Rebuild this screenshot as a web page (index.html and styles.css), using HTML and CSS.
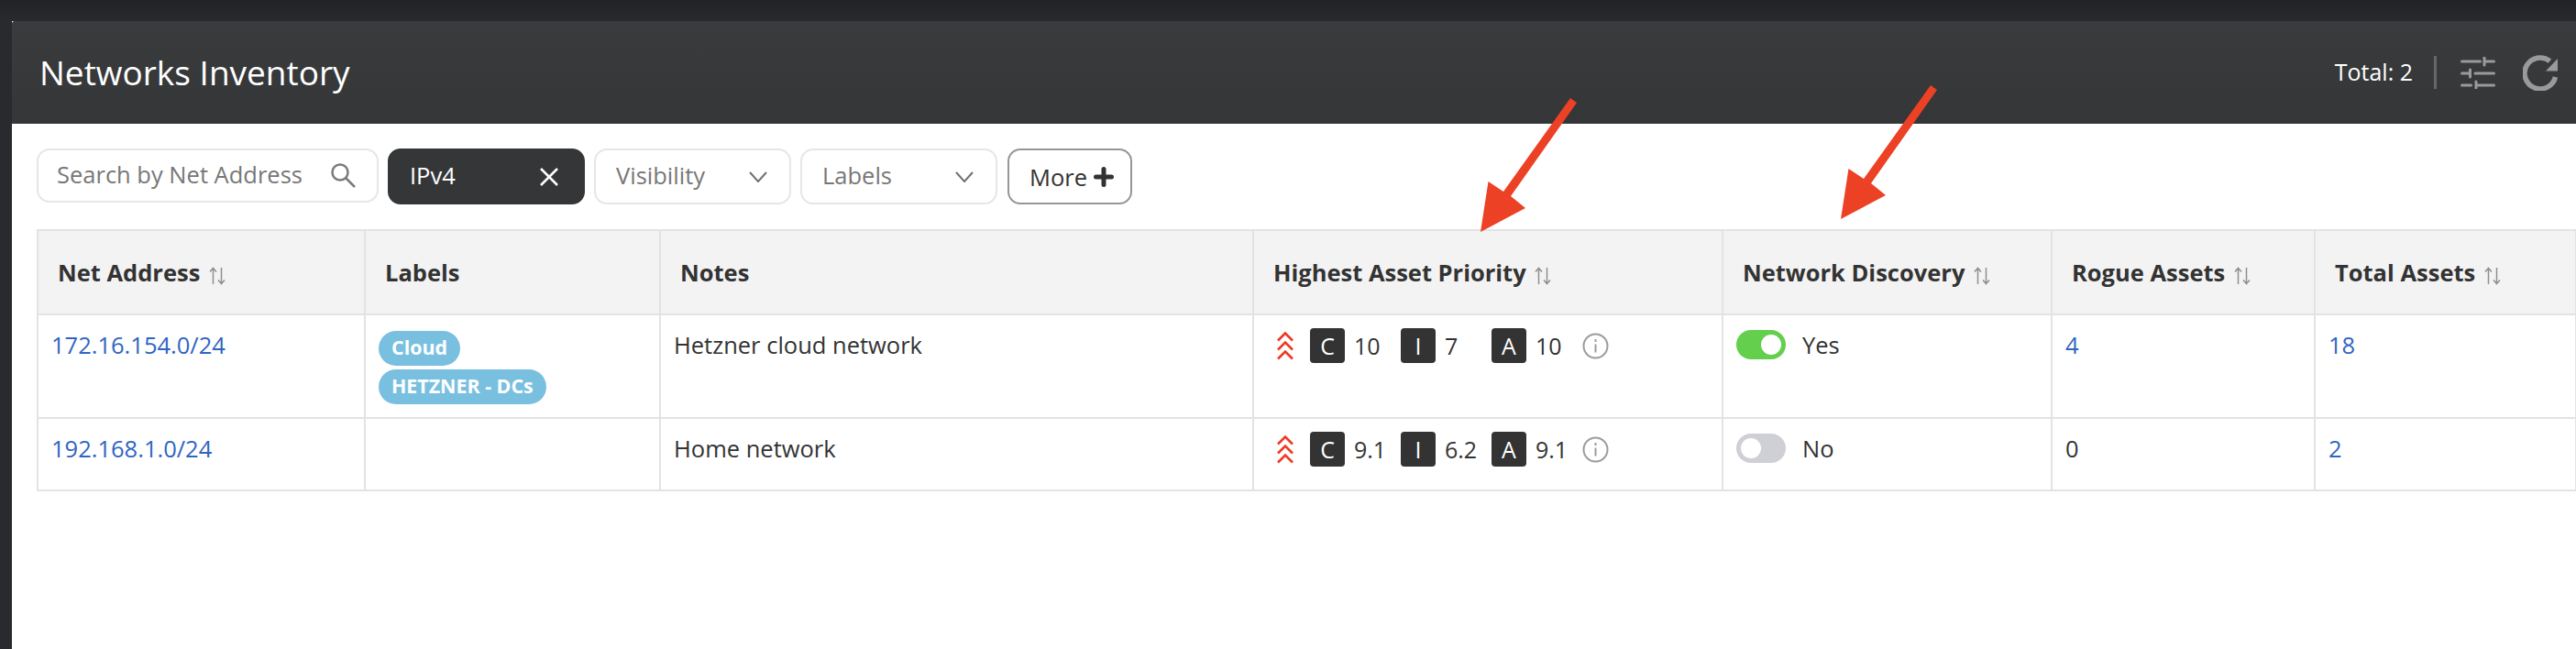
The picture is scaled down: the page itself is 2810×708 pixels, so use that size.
FILE: index.html
```html
<!DOCTYPE html>
<html lang="en">
<head>
    <meta charset="UTF-8">
    <meta name="viewport" content="width=device-width, initial-scale=1.0">
    <title>Networks Inventory</title>
    <link rel="stylesheet" href="styles.css">
</head>
<body>
    <div class="card">
        <div class="card-header">
            <h1>Networks Inventory</h1>
            <div class="header-tools">
                <span class="total">Total: 2</span>
                <span class="divider"></span>
                <svg class="tool-sliders" width="38" height="35" viewBox="0 0 38 35" fill="none" stroke="#9a9a9b" stroke-width="3" stroke-linecap="round">
                    <path d="M1.5 5h20M26 5h10.5M26 1v8"/>
                    <path d="M1.5 18h9M10.5 14v8M16 18h20.5"/>
                    <path d="M1.5 31h10M17 31h19.5M17 27v7"/>
                </svg>
                <svg class="tool-refresh" width="39" height="39" viewBox="0 0 39 39" fill="none">
                    <path d="M29.5 6.6A17 17 0 1 0 35.5 24" stroke="#9a9a9b" stroke-width="5.5"/>
                    <path d="M38 4v13.500H25z" fill="#9a9a9b"/>
                </svg>
            </div>
        </div>

        <div class="filters">
            <div class="filter search">
                <span>Search by Net Address</span>
                <svg width="30" height="30" viewBox="0 0 30 30" fill="none" stroke="#7b7b7b" stroke-width="2.500">
                    <circle cx="11" cy="11" r="8.500"/>
                    <path d="M17 17l10 10"/>
                </svg>
            </div>
            <div class="filter active">
                <span>IPv4</span>
                <svg width="22" height="22" viewBox="0 0 22 22" fill="none" stroke="#fff" stroke-width="2.500">
                    <path d="M2 2l18 18M20 2L2 20"/>
                </svg>
            </div>
            <div class="filter">
                <span>Visibility</span>
                <svg width="20" height="12" viewBox="0 0 20 12" fill="none" stroke="#707070" stroke-width="2">
                    <path d="M1 1l9 10 9-10"/>
                </svg>
            </div>
            <div class="filter">
                <span>Labels</span>
                <svg width="20" height="12" viewBox="0 0 20 12" fill="none" stroke="#707070" stroke-width="2">
                    <path d="M1 1l9 10 9-10"/>
                </svg>
            </div>
            <div class="more">
                <span>More</span>
                <svg width="22" height="22" viewBox="0 0 22 22" fill="none" stroke="#333" stroke-width="5" stroke-linecap="round">
                    <path d="M11 2.500v17M2.500 11h17"/>
                </svg>
            </div>
        </div>

        <table class="inventory">
            <colgroup>
                <col class="col-net">
                <col class="col-labels">
                <col class="col-notes">
                <col class="col-priority">
                <col class="col-discovery">
                <col class="col-rogue">
                <col class="col-total">
            </colgroup>
            <thead>
                <tr>
                    <th>Net Address <svg class="sort" width="18" height="20" viewBox="0 0 18 20" fill="none" stroke="#8f8f8f" stroke-width="1.500"><path d="M4.500 19V2M1 5.500L4.500 1.500 8 5.500M13.500 1v17M10 14.500l3.500 4 3.500-4"/></svg></th>
                    <th>Labels</th>
                    <th>Notes</th>
                    <th>Highest Asset Priority <svg class="sort" width="18" height="20" viewBox="0 0 18 20" fill="none" stroke="#8f8f8f" stroke-width="1.500"><path d="M4.500 19V2M1 5.500L4.500 1.500 8 5.500M13.500 1v17M10 14.500l3.500 4 3.500-4"/></svg></th>
                    <th>Network Discovery <svg class="sort" width="18" height="20" viewBox="0 0 18 20" fill="none" stroke="#8f8f8f" stroke-width="1.500"><path d="M4.500 19V2M1 5.500L4.500 1.500 8 5.500M13.500 1v17M10 14.500l3.500 4 3.500-4"/></svg></th>
                    <th>Rogue Assets <svg class="sort" width="18" height="20" viewBox="0 0 18 20" fill="none" stroke="#8f8f8f" stroke-width="1.500"><path d="M4.500 19V2M1 5.500L4.500 1.500 8 5.500M13.500 1v17M10 14.500l3.500 4 3.500-4"/></svg></th>
                    <th>Total Assets <svg class="sort" width="18" height="20" viewBox="0 0 18 20" fill="none" stroke="#8f8f8f" stroke-width="1.500"><path d="M4.500 19V2M1 5.500L4.500 1.500 8 5.500M13.500 1v17M10 14.500l3.500 4 3.500-4"/></svg></th>
                </tr>
            </thead>
            <tbody>
                <tr class="row-first">
                    <td><a href="#">172.16.154.0/24</a></td>
                    <td class="labels-cell">
                        <span class="badge">Cloud</span>
                        <span class="badge">HETZNER - DCs</span>
                    </td>
                    <td>Hetzner cloud network</td>
                    <td class="priority-cell">
                        <div class="priority">
                            <svg class="chevrons" width="18" height="31" viewBox="0 0 18 31" fill="none" stroke="#ee3a22" stroke-width="2.600"><path d="M1 9.500L9 1.500l8 8M1 19.500l8-8 8 8M1 29.500l8-8 8 8"/></svg>
                            <span class="score"><b>C</b>10</span>
                            <span class="score"><b>I</b>7</span>
                            <span class="score"><b>A</b>10</span>
                            <svg class="info" width="29" height="29" viewBox="0 0 29 29" fill="none" stroke="#9c9c9c" stroke-width="2"><circle cx="14.500" cy="14.500" r="13"/><path d="M14.500 12.500v9M14.500 7v3"/></svg>
                        </div>
                    </td>
                    <td class="discovery-cell">
                        <div class="discovery"><span class="toggle on"></span>Yes</div>
                    </td>
                    <td class="num"><a href="#">4</a></td>
                    <td class="num"><a href="#">18</a></td>
                </tr>
                <tr class="row-second">
                    <td><a href="#">192.168.1.0/24</a></td>
                    <td></td>
                    <td>Home network</td>
                    <td class="priority-cell">
                        <div class="priority">
                            <svg class="chevrons" width="18" height="31" viewBox="0 0 18 31" fill="none" stroke="#ee3a22" stroke-width="2.600"><path d="M1 9.500L9 1.500l8 8M1 19.500l8-8 8 8M1 29.500l8-8 8 8"/></svg>
                            <span class="score"><b>C</b>9.1</span>
                            <span class="score"><b>I</b>6.2</span>
                            <span class="score"><b>A</b>9.1</span>
                            <svg class="info" width="29" height="29" viewBox="0 0 29 29" fill="none" stroke="#9c9c9c" stroke-width="2"><circle cx="14.500" cy="14.500" r="13"/><path d="M14.500 12.500v9M14.500 7v3"/></svg>
                        </div>
                    </td>
                    <td class="discovery-cell">
                        <div class="discovery"><span class="toggle"></span>No</div>
                    </td>
                    <td class="num">0</td>
                    <td class="num"><a href="#">2</a></td>
                </tr>
            </tbody>
        </table>
    </div>

    <!-- annotation arrows drawn on top of the screenshot -->
    <svg class="arrows" width="2810" height="708" viewBox="0 0 2810 708">
        <path fill="#ec4125" d="M1713 107L1720 112 1648 214 1664 227 1615 253 1623.500 198 1640 209z"/>
        <path fill="#ec4125" d="M2106 93L2113 98 2041 200 2057 213 2008 239 2016.500 184 2033 195z"/>
    </svg>
</body>
</html>
```

FILE: styles.css
```css
html, body {
    height: 100%;
}
body {
    margin: 0;
    overflow: hidden;
    font-family: 'Open Sans', 'Noto Sans', sans-serif;
    font-size: 25.5px;
    color: #333;
    background: linear-gradient(180deg, #222327 0, #292a2e 23px);
    padding: 23px 0 0 13px;
    box-sizing: border-box;
}
a {
    color: #2f65c2;
    text-decoration: none;
}
.card {
    background: white;
    height: 100%;
    width: 2797px;
}
.card-header {
    height: 112px;
    background: linear-gradient(180deg, #3a3b3d, #353638);
    display: flex;
    align-items: center;
    justify-content: space-between;
    padding: 0 19px 0 30px;
    box-sizing: border-box;
    border-top-left-radius: 3px;
}
.card-header h1 {
    margin: 0 0 2px;
    font-size: 37px;
    font-weight: 400;
    color: white;
}
.header-tools {
    display: flex;
    align-items: center;
}
.total {
    color: white;
    font-size: 25px;
    margin-right: 23px;
    padding-bottom: 2px;
}
.divider {
    width: 3px;
    height: 36px;
    background: #666769;
    margin-right: 26px;
}
.tool-sliders {
    margin-right: 30px;
}
.filters {
    display: flex;
    gap: 10px;
    padding: 27px 0 27px 27px;
    height: 115px;
    box-sizing: border-box;
    align-items: flex-start;
}
.filter {
    display: flex;
    align-items: center;
    justify-content: space-between;
    width: 215px;
    height: 61px;
    box-sizing: border-box;
    border: 2px solid #e6e6e6;
    border-radius: 14px;
    padding: 0 24px 0 22px;
    color: #777;
    font-size: 25.5px;
}
.filter span {
    padding-bottom: 3px;
}
.filter.search {
    width: 373px;
    height: 59px;
    padding: 0 21px 0 20px;
}
.filter.active {
    background: #353638;
    border-color: #353638;
    color: white;
    padding-right: 26px;
}
.more {
    display: flex;
    align-items: center;
    gap: 7px;
    width: 136px;
    height: 61px;
    box-sizing: border-box;
    border: 2px solid #969696;
    border-radius: 14px;
    padding: 0 0 0 22px;
    margin-left: 1px;
    font-size: 25.5px;
}
.inventory {
    margin-left: 27px;
    width: 2769px;
    table-layout: fixed;
    border-collapse: collapse;
}
.col-net { width: 357px; }
.col-labels { width: 322px; }
.col-notes { width: 647px; }
.col-priority { width: 512px; }
.col-discovery { width: 359px; }
.col-rogue { width: 287px; }
.col-total { width: 285px; }
.inventory th, .inventory td {
    border: 2px solid #e3e3e3;
    text-align: left;
    vertical-align: top;
}
.inventory th {
    height: 92px;
    box-sizing: border-box;
    background: #f3f3f3;
    font-size: 25.5px;
    font-weight: 700;
    padding: 0 0 0 21px;
    vertical-align: middle;
    white-space: nowrap;
}
.sort {
    margin-left: 3px;
    vertical-align: -4px;
}
.inventory td {
    padding: 15px 14px 0 14px;
    box-sizing: border-box;
    line-height: 35px;
}
.row-first td {
    height: 113px;
}
.row-second td {
    height: 79px;
}
.inventory td.labels-cell {
    padding: 17px 0 0 14px;
}
.badge {
    display: block;
    width: fit-content;
    height: 38px;
    line-height: 35px;
    padding: 0 14px;
    border-radius: 19px;
    background: #79bfdf;
    color: white;
    font-size: 21.4px;
    font-weight: 700;
    margin-bottom: 4px;
}
.inventory td.priority-cell {
    padding: 14px 0 0 25px;
}
.priority {
    display: flex;
    align-items: center;
    height: 38px;
}
.chevrons {
    margin-right: 18px;
}
.score {
    display: flex;
    align-items: center;
    width: 99px;
    font-size: 25px;
}
.score b {
    width: 38px;
    height: 38px;
    line-height: 38px;
    text-align: center;
    background: #333;
    color: white;
    font-weight: 400;
    border-radius: 4px;
    margin-right: 10px;
    flex: none;
}
.inventory td.discovery-cell {
    padding: 16px 0 0 14px;
}
.discovery {
    display: flex;
    align-items: center;
    height: 32px;
}
.toggle {
    position: relative;
    width: 54px;
    height: 32px;
    border-radius: 16px;
    background: #cfd0d6;
    margin-right: 18px;
}
.toggle::after {
    content: '';
    position: absolute;
    top: 5px;
    left: 5px;
    width: 22px;
    height: 22px;
    border-radius: 50%;
    background: white;
}
.toggle.on {
    background: #63cf4d;
}
.toggle.on::after {
    left: 27px;
}
.arrows {
    position: absolute;
    left: 0;
    top: 0;
    pointer-events: none;
}
```
